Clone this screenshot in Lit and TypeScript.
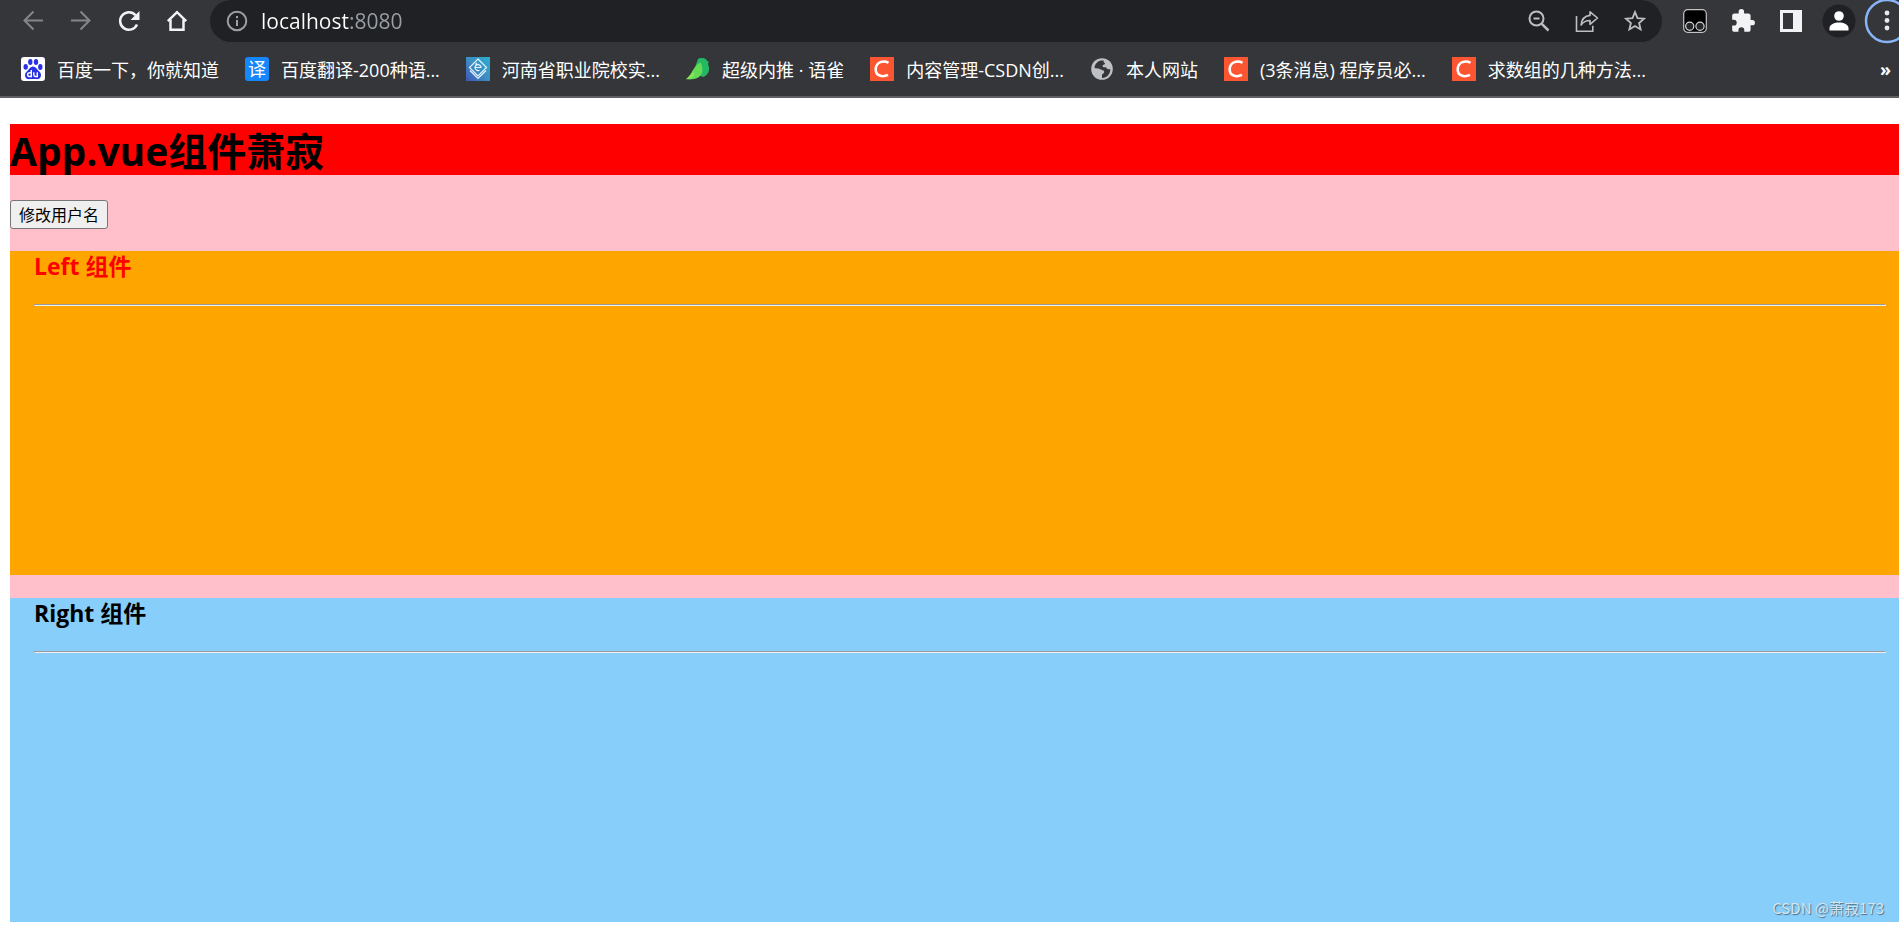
import { LitElement, html, css, svg } from "lit";
import { customElement, property, state } from "lit/decorators.js";

const stroke = (content: unknown) => html`<svg width="24" height="24" viewBox="0 0 24 24" fill="none" stroke="currentColor" stroke-width="2" aria-hidden="true">${content}</svg>`;

const icons = {
  back: stroke(svg`<path d="M22 11.500H3.500M12.500 2.500l-9 9 9 9"/>`),
  forward: stroke(svg`<path d="M2 11.500h18.500M11.500 2.500l9 9-9 9"/>`),
  reload: stroke(svg`<path stroke-width="2.500" d="M20 15.500A8.800 8.800 0 1 1 18.600 6.200"/><path d="M22.500 2v9h-9z" fill="currentColor" stroke="none"/>`),
  home: stroke(svg`<path stroke-width="2.500" d="M2.800 12.200 12 3.200l9.200 9M5.500 10.500v10.200h13V10.500"/>`),
  info: stroke(svg`<circle cx="12" cy="12" r="9.300"/><path d="M12 11v6M12 7v2.200"/>`),
  zoomOut: stroke(svg`<circle cx="9.500" cy="9.500" r="7"/><path d="M6.500 9.500h6"/><path stroke-width="2.500" d="m14.800 14.800 6.700 6.700"/>`),
  share: stroke(svg`<path stroke-width="1.600" d="M1.500 7v15.200h16.300v-5.500"/><path stroke-width="1.600" stroke-linejoin="round" d="M15 2.800 22.500 9 15 15.300v-3.800c-4.200 0-6.700 1.300-8.900 4.500.5-5.500 3.600-9 8.900-9.600z"/>`),
  star: stroke(svg`<path stroke-width="1.800" d="m12 3.200 2.500 6 6.500.5-4.900 4.300 1.500 6.400-5.600-3.400-5.600 3.400L7.900 14 3 9.700l6.500-.5z"/>`),
  monkey: html`<svg width="24" height="24" viewBox="0 0 24 24" aria-hidden="true"><rect x=".7" y=".7" width="22.600" height="22.600" rx="4" fill="#000" stroke="#c4c4c4" stroke-width="1.200"/><g fill="#26272a" stroke="#d5d5d5" stroke-width="1.200"><circle cx="6.700" cy="17.300" r="4.100"/><circle cx="17" cy="17.300" r="4.100"/></g></svg>`,
  puzzle: html`<svg width="26" height="26" viewBox="0 0 24 24" fill="currentColor" aria-hidden="true"><path d="M20.500 11H19V7c0-1.100-.9-2-2-2h-4V3.500a2.500 2.500 0 0 0-5 0V5H4c-1.100 0-2 .9-2 2v3.800h1.500a2.700 2.700 0 0 1 0 5.400H2V20c0 1.100.9 2 2 2h3.800v-1.500a2.700 2.700 0 0 1 5.400 0V22H17c1.100 0 2-.9 2-2v-4h1.500a2.500 2.500 0 0 0 0-5z"/></svg>`,
  panel: html`<svg width="24" height="24" viewBox="0 0 24 24" aria-hidden="true"><path fill="currentColor" fill-rule="evenodd" d="M1 1h22v22H1zM4 4v16h10V4z"/></svg>`,
  avatar: html`<svg width="34" height="34" viewBox="0 0 34 34" aria-hidden="true"><circle cx="17" cy="17" r="16.500" fill="#202124"/><g fill="#fff"><circle cx="17" cy="12" r="4.800"/><path d="M7.500 26.500v-2.300c0-3.800 5-5.700 9.500-5.700s9.500 1.900 9.500 5.700v2.300z"/></g></svg>`,
  menu: html`<svg width="48" height="46" viewBox="0 0 48 46" aria-hidden="true"><circle cx="24" cy="23" r="21" fill="none" stroke="#8ab4f8" stroke-width="2.500"/><g fill="#e8eaed"><circle cx="24" cy="15" r="2.400"/><circle cx="24" cy="22.500" r="2.400"/><circle cx="24" cy="30" r="2.400"/></g></svg>`,
};

const csdn = html`<svg width="24" height="24" viewBox="0 0 24 24" aria-hidden="true"><path fill="#fc5531" d="M0 0h24v24H0z"/><path fill="none" stroke="#fff" stroke-width="2.600" d="M18.500 5.800C13.500 3 6.300 4.800 5.700 11.700c-.6 7.500 7 8.800 12.300 6.200"/></svg>`;

const favicons = {
  csdn,
  baidu: html`<svg width="24" height="24" viewBox="0 0 24 24" aria-hidden="true"><rect width="24" height="24" rx="3" fill="#fff"/><g fill="#2932e1"><ellipse cx="4.700" cy="9.800" rx="2.200" ry="2.900"/><ellipse cx="9.300" cy="5" rx="2.200" ry="3"/><ellipse cx="15" cy="5" rx="2.200" ry="3"/><ellipse cx="19.300" cy="10" rx="2.200" ry="2.900"/><path d="M12 9.500c2.500 0 3.500 2.300 5 3.800 1.800 1.800 3.300 3 3 5.500-.4 3-3 3.600-5 3.300-2-.3-4-.3-6 0s-4.700-.3-5-3.300c-.2-2.500 1.300-3.700 3-5.500 1.500-1.500 2.500-3.800 5-3.800z"/></g><path fill="none" stroke="#fff" stroke-width="1.400" d="M10.300 13v6.500H8.500a1.900 1.900 0 0 1 0-3.800h1.800M12.800 15.300v2.500c0 1.200.5 1.700 1.500 1.700h2v-4.200"/></svg>`,
  fanyi: html`<span class="fanyi">译</span>`,
  college: html`<svg width="24" height="24" viewBox="0 0 24 24" aria-hidden="true"><defs><linearGradient id="sea" x1="1" y1="0" x2="0" y2="1"><stop offset="0" stop-color="#2aaed0"/><stop offset=".5" stop-color="#3d8fc4"/><stop offset="1" stop-color="#3f55b5"/></linearGradient></defs><path fill="url(#sea)" d="M0 0h24v24H0z"/><g fill="none" stroke="#e6f4ff" stroke-width="1.200"><path d="M12 2 20.500 10.500 12 19l-8.500-8.500z"/><path d="m4 13.500 8 8 8-8"/><path d="M9 10.500h6a3 3 0 1 0-1.500 2.700M9.500 7.500 11 6"/></g></svg>`,
  yuque: html`<svg width="24" height="24" viewBox="0 0 24 24" aria-hidden="true"><path fill="#25b864" d="M12 2c2-1.300 6-1.500 8 .5 1.200 1 1.500 2 3 2.500-1.300 1-1 2.200-.3 4 1.500 4.700-1 9.500-5.700 11L7 16z"/><path fill="#65db55" d="M14.500 5.500C17.500 11 17 17 13 20c-4 2.500-8 2.500-13 2.300C6 18 7 9 14.500 5.500z"/><path fill="#8fe85a" d="M0 22.300 8 15c1 3-1 6-8 7.300z"/></svg>`,
  globe: html`<svg width="24" height="24" viewBox="0 0 24 24" aria-hidden="true"><circle cx="12" cy="12" r="10.800" fill="#bdc1c6"/><path fill="#35363a" d="M11 3.500c-3 .5-6.500 3.500-6.500 7.500 2 .8 4.500-.2 6.200 1.500 1.500 1.300 3.300.3 3.500 2.300.2 1.700-1.700 1.700-2.200 3L12 21c4.500.3 8.500-4 8.300-9-1.800.7-3.500 0-4-1.500-1.300-.3-3.500.3-3.800-1.200-.2-1.600 2-1.300 2.500-2.500.3-1.300-1.500-1-1.500-2.300 0-.7.500-1 .5-1z"/></svg>`,
};

interface Bookmark {
  icon: keyof typeof favicons;
  title: string;
}

const bookmarks: Bookmark[] = [
  { icon: "baidu", title: "百度一下，你就知道" },
  { icon: "fanyi", title: "百度翻译-200种语..." },
  { icon: "college", title: "河南省职业院校实..." },
  { icon: "yuque", title: "超级内推 · 语雀" },
  { icon: "csdn", title: "内容管理-CSDN创..." },
  { icon: "globe", title: "本人网站" },
  { icon: "csdn", title: "(3条消息) 程序员必..." },
  { icon: "csdn", title: "求数组的几种方法..." },
];

@customElement("browser-bar")
class BrowserBar extends LitElement {
  static styles = css`
    :host {
      display: block;
      overflow: hidden;
      background: #35363a;
      border-bottom: 2px solid #5f6064;
      font-family: "Open Sans", "Noto Sans CJK SC", sans-serif;
      color: #fff;
    }
    .toolbar {
      display: flex;
      align-items: center;
      height: 42px;
      padding-left: 9px;
      margin-right: -12px;
    }
    .tool {
      display: flex;
      flex: none;
      align-items: center;
      justify-content: center;
      width: 48px;
      height: 42px;
      padding: 0;
      border: 0;
      background: none;
      color: #f1f3f4;
    }
    .tool svg,
    .icon svg {
      display: block;
      flex: none;
    }
    .dim {
      color: #85868a;
    }
    .soft {
      color: #bdbec0;
    }
    .address {
      display: flex;
      flex: 1;
      align-items: center;
      height: 42px;
      margin: 0 9px;
      padding: 0 3px;
      border-radius: 21px;
      box-sizing: border-box;
      background: #202124;
    }
    .site {
      color: #9aa0a6;
    }
    .url {
      flex: 1;
      min-width: 0;
      height: 30px;
      padding: 0;
      border: 0;
      outline: 0;
      font: 21px/30px "Open Sans", sans-serif;
      color: transparent;
      background: linear-gradient(90deg, #fff 88px, #9aa0a6 88px);
      background-clip: text;
      -webkit-background-clip: text;
    }
    .bookmarks {
      display: flex;
      align-items: center;
      gap: 26px;
      height: 54px;
      padding: 0 8px 0 21px;
    }
    .bookmark {
      display: flex;
      align-items: center;
      gap: 12px;
      color: #fff;
      text-decoration: none;
      font-size: 18px;
      line-height: 24px;
      white-space: nowrap;
    }
    .name {
      padding-top: 2px;
    }
    .icon {
      width: 24px;
      height: 24px;
    }
    .fanyi {
      display: block;
      border-radius: 3px;
      background: #1687fb;
      font-size: 18px;
      line-height: 24px;
      text-align: center;
    }
    .more {
      margin-left: auto;
      padding: 0;
      border: 0;
      background: none;
      color: #fff;
      font: bold 18px/24px "Open Sans", sans-serif;
    }
  `;

  private tool(label: string, icon: unknown, tone = "") {
    return html`<button class="tool ${tone}" aria-label=${label}>${icon}</button>`;
  }

  render() {
    return html`
      <div class="toolbar">
        ${this.tool("后退", icons.back, "dim")}
        ${this.tool("前进", icons.forward, "dim")}
        ${this.tool("重新加载", icons.reload)}
        ${this.tool("主页", icons.home)}
        <div class="address">
          ${this.tool("网站信息", icons.info, "site")}
          <input class="url" type="text" aria-label="地址" .value=${"localhost:8080"} />
          ${this.tool("缩放", icons.zoomOut, "soft")}
          ${this.tool("分享", icons.share, "soft")}
          ${this.tool("收藏", icons.star, "soft")}
        </div>
        ${this.tool("脚本", icons.monkey)}
        ${this.tool("扩展程序", icons.puzzle)}
        ${this.tool("侧边栏", icons.panel)}
        ${this.tool("用户", icons.avatar)}
        ${this.tool("菜单", icons.menu)}
      </div>
      <nav class="bookmarks">
        ${bookmarks.map(
          (b) => html`<a class="bookmark" href="#"><span class="icon">${favicons[b.icon]}</span><span class="name">${b.title}</span></a>`
        )}
        <button class="more" aria-label="更多书签">»</button>
      </nav>
    `;
  }
}

@customElement("side-panel")
class SidePanel extends LitElement {
  static styles = css`
    :host {
      display: block;
      min-height: 324px;
      padding: 0 13px 0 24px;
      box-sizing: border-box;
    }
    .title {
      margin: 0;
      font-size: 23px;
      line-height: 31px;
    }
    .rule {
      margin: 22px 0 0;
      border: 1px solid;
      border-color: #9a9a9a #eee #eee #9a9a9a;
    }
  `;

  @property() heading = "";

  render() {
    return html`<h3 class="title">${this.heading}</h3><hr class="rule" />`;
  }
}

@customElement("app-root")
class AppRoot extends LitElement {
  static styles = css`
    :host {
      display: block;
      min-height: 100vh;
      background: #fff;
      color: #000;
      font-family: "Open Sans", "Noto Sans CJK SC", sans-serif;
    }
    .page {
      position: relative;
      margin: 26px 0 3px 10px;
      background: pink;
    }
    .heading {
      margin: 0 0 25px;
      padding-top: 2px;
      background: red;
      font-size: 39px;
      line-height: 49px;
    }
    .rename {
      display: block;
      height: 29px;
      padding: 0 8px;
      border: 1px solid #767676;
      border-radius: 3px;
      background: #efefef;
      color: #000;
      font: 16px/24px "Open Sans", "Noto Sans CJK SC", sans-serif;
    }
    .left {
      margin-top: 22px;
      background: orange;
      color: red;
    }
    .right {
      margin-top: 23px;
      background: lightskyblue;
    }
    .watermark {
      position: absolute;
      right: 15px;
      bottom: 4px;
      color: #d5e4ee;
      font: 15px/20px "Noto Sans CJK SC", sans-serif;
      text-shadow: 1px 1px 1px #4d6f86;
    }
  `;

  @state() private username = "萧寂";

  render() {
    return html`
      <browser-bar></browser-bar>
      <main class="page">
        <h1 class="heading">App.vue组件${this.username}</h1>
        <button class="rename">修改用户名</button>
        <side-panel class="left" heading="Left 组件"></side-panel>
        <side-panel class="right" heading="Right 组件"></side-panel>
        <span class="watermark">CSDN @萧寂173</span>
      </main>
    `;
  }
}
